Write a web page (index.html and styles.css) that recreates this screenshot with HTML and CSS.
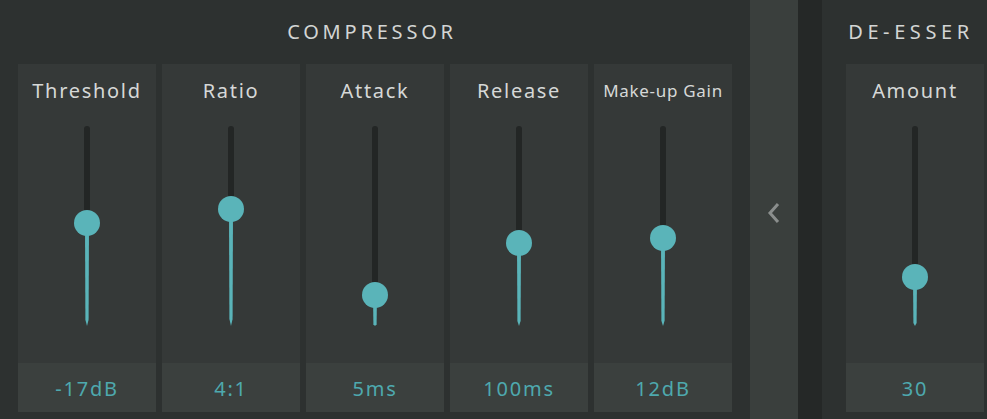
FILE: index.html
```html
<!DOCTYPE html>
<html lang="en">
<head>
	<meta charset="UTF-8">
	<title>Dynamics</title>
	<link rel="stylesheet" href="styles.css">
</head>
<body>
	<div class="rack">
		<div class="section compressor">
			<div class="section-title">COMPRESSOR</div>
			<div class="cards">
				<div class="card">
					<div class="label">Threshold</div>
					<div class="slider"><div class="track" style="--v:97px"><div class="rail"></div><div class="fill"></div><div class="thumb"></div></div></div>
					<div class="value">-17dB</div>
				</div>
				<div class="card">
					<div class="label">Ratio</div>
					<div class="slider"><div class="track" style="--v:83px"><div class="rail"></div><div class="fill"></div><div class="thumb"></div></div></div>
					<div class="value">4:1</div>
				</div>
				<div class="card">
					<div class="label">Attack</div>
					<div class="slider"><div class="track" style="--v:169px"><div class="rail"></div><div class="fill"></div><div class="thumb"></div></div></div>
					<div class="value">5ms</div>
				</div>
				<div class="card">
					<div class="label">Release</div>
					<div class="slider"><div class="track" style="--v:117px"><div class="rail"></div><div class="fill"></div><div class="thumb"></div></div></div>
					<div class="value">100ms</div>
				</div>
				<div class="card">
					<div class="label small">Make-up Gain</div>
					<div class="slider"><div class="track" style="--v:112px"><div class="rail"></div><div class="fill"></div><div class="thumb"></div></div></div>
					<div class="value">12dB</div>
				</div>
			</div>
		</div>

		<div class="collapse">
			<svg width="14" height="22" viewBox="0 0 14 22">
				<polyline points="11,2 3,11 11,20" fill="none" stroke="#8a8e8d" stroke-width="3"/>
			</svg>
		</div>
		<div class="gutter"></div>

		<div class="section deesser">
			<div class="section-title">DE-ESSER</div>
			<div class="cards">
				<div class="card">
					<div class="label">Amount</div>
					<div class="slider"><div class="track" style="--v:151px"><div class="rail"></div><div class="fill"></div><div class="thumb"></div></div></div>
					<div class="value">30</div>
				</div>
			</div>
		</div>
	</div>
</body>
</html>
```

FILE: styles.css
```css
* {
	margin: 0;
	padding: 0;
	box-sizing: border-box;
}
body {
	background-color: #2d3130;
	font-family: "Noto Sans", "DejaVu Sans", sans-serif;
	overflow: hidden;
}
.rack {
	display: flex;
	height: 419px;
}
.section {
	display: flex;
	flex-direction: column;
}
.compressor {
	width: 750px;
	padding: 0 18px;
}
.deesser {
	flex: 1;
	padding-left: 24px;
}
.section-title {
	height: 64px;
	display: flex;
	align-items: center;
	justify-content: center;
	color: #d3d5d4;
	font-size: 20px;
	letter-spacing: 3.8px;
	padding: 0 6px 1px 0;
}
.deesser .section-title {
	letter-spacing: 4.6px;
	padding-right: 11px;
}
.cards {
	display: flex;
	gap: 6px;
}
.card {
	width: 138px;
	height: 348px;
	background-color: #353938;
	display: flex;
	flex-direction: column;
}
.label {
	height: 52px;
	display: flex;
	align-items: center;
	justify-content: center;
	color: #d6d8d7;
	font-size: 20px;
	letter-spacing: 1.7px;
}
.label.small {
	font-size: 17px;
	letter-spacing: 0.7px;
}
.slider {
	flex: 1;
	display: flex;
	justify-content: center;
	padding-top: 10px;
}
.track {
	position: relative;
	width: 6px;
	height: 200px;
	display: flex;
	flex-direction: column;
	align-items: center;
}
.rail {
	width: 6px;
	height: var(--v);
	background-color: #232625;
	border-radius: 3px 3px 0 0;
}
.fill {
	flex: 1;
	width: 4px;
	background-color: #5ab4b9;
	clip-path: polygon(0 0, 100% 0, 90% 94%, 50% 100%, 10% 94%);
}
.thumb {
	position: absolute;
	left: 50%;
	top: var(--v);
	width: 26px;
	height: 26px;
	margin: -13px 0 0 -13px;
	border-radius: 50%;
	background-color: #5ab4b9;
}
.value {
	height: 49px;
	background-color: #3b403e;
	display: flex;
	align-items: center;
	justify-content: center;
	color: #4ea9ae;
	font-size: 20px;
	letter-spacing: 1.8px;
	padding-top: 2px;
}
.collapse {
	width: 48px;
	background-color: #3a3f3d;
	display: flex;
	align-items: center;
	justify-content: center;
	padding-top: 7px;
}
.gutter {
	width: 24px;
	background-color: #252827;
}
```
